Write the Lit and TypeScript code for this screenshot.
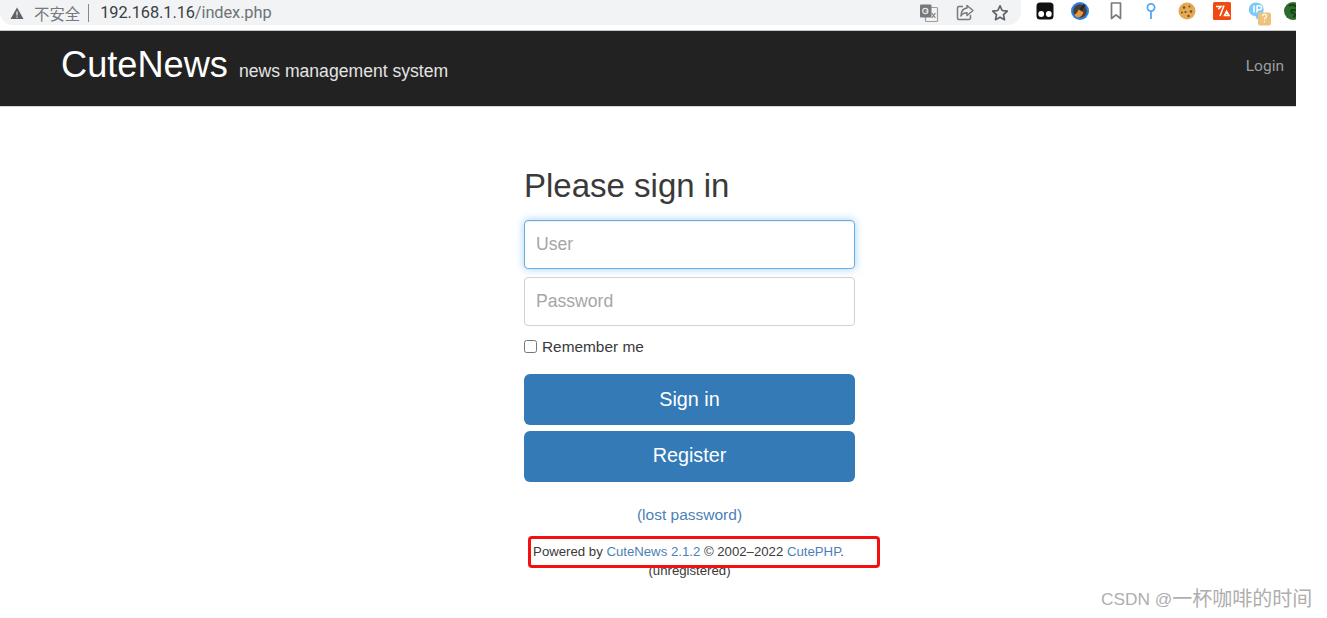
import { LitElement, html, css, svg } from "lit";
import { customElement } from "lit/decorators.js";

const translate = svg`<svg width="20" height="20" viewBox="0 0 20 20"><rect x="6.500" y="4.500" width="12" height="14" rx="1" fill="#f4f4f4" stroke="#9a9da1" stroke-width="1.200"/><rect x="1" y="1.500" width="11.500" height="13" rx="1" fill="#75787c"/><circle cx="6.300" cy="8" r="2.600" fill="none" stroke="#e8e8e8" stroke-width="1.200"/><path d="M6.500 8h2.400" stroke="#e8e8e8" stroke-width="1"/><path d="M12.800 10l3.600 5M16.400 10l-3.600 5" stroke="#777" stroke-width="1.100"/></svg>`;
const share = svg`<svg width="20" height="20" viewBox="0 0 20 20" fill="none" stroke="#77797d" stroke-width="1.500"><path d="M8 3.500H4a1.500 1.500 0 0 0-1.500 1.500v10A1.500 1.500 0 0 0 4 16.500h10a1.500 1.500 0 0 0 1.500-1.500v-3"/><path d="M12 2.500l6 5-6 5V9.700C9 9.700 7 10.800 6 13c0-4 2-7.500 6-8z" stroke-linejoin="round"/></svg>`;
const star = svg`<svg width="20" height="20" viewBox="0 0 20 20" fill="none" stroke="#606367" stroke-width="1.700"><path d="M10 2.800l2.200 4.700 5.100.6-3.800 3.500 1 5.100L10 14.200l-4.500 2.500 1-5.100L2.700 8.100l5.100-.6z" stroke-linejoin="round"/></svg>`;
const glasses = svg`<svg width="20" height="20" viewBox="0 0 20 20"><rect x="1.500" y="1.500" width="17" height="17" rx="3.500" fill="#111"/><circle cx="6.200" cy="13" r="2.900" fill="#fff"/><circle cx="13.800" cy="13" r="2.900" fill="#fff"/></svg>`;
const broom = svg`<svg width="20" height="20" viewBox="0 0 20 20"><circle cx="10" cy="10" r="9" fill="#2f7fe0"/><circle cx="10" cy="10" r="6.800" fill="#4a4038"/><path d="M4.500 13.500c2-.5 3-2.500 4-5l5 3c-1 2.500-2.500 4.500-5 5-2 .2-3.200-1.300-4-3z" fill="#e8993a"/><path d="M9.500 8l4-5 2 1.500-3.500 5z" fill="#2b2622"/></svg>`;
const bookmark = svg`<svg width="20" height="20" viewBox="0 0 20 20" fill="none" stroke="#77797d" stroke-width="1.700"><path d="M5.500 2h9v15.500L10 13.800 5.500 17.500z" stroke-linejoin="round"/></svg>`;
const pin = svg`<svg width="20" height="20" viewBox="0 0 20 20" fill="none" stroke="#56a6f5" stroke-width="1.800"><circle cx="10" cy="6.500" r="3.600"/><path d="M10 10v8"/></svg>`;
const cookie = svg`<svg width="20" height="20" viewBox="0 0 20 20"><circle cx="10" cy="10" r="8.500" fill="#e3aa55"/><g fill="#7a4a1e"><circle cx="7" cy="6.500" r="1.300"/><circle cx="12.500" cy="5.500" r="1"/><circle cx="14" cy="10.500" r="1.300"/><circle cx="8.500" cy="11" r="1.100"/><circle cx="5" cy="11.500" r=".9"/><circle cx="11.500" cy="15" r="1.200"/></g></svg>`;
const code = svg`<svg width="20" height="20" viewBox="0 0 20 20"><rect x="1" y="1" width="18" height="18" rx="1.500" fill="#f04a12"/><path d="M4 5.500h5L6.300 8.200M12 4.500L8 15M12.500 14.500h4.500L14.600 10.500z" fill="none" stroke="#fff" stroke-width="1.600"/></svg>`;
const ip = svg`<svg width="24" height="24" viewBox="0 0 24 24" overflow="visible"><path d="M9.500 1.500a7.500 7 0 0 0-4 13l3 .5 1.500 4 2-4 1-.5a7.500 7 0 0 0-3.500-13z" fill="#7cc8f7"/><path d="M7 4.500v7M10 4.500v7M10 4.800h2.500a2 2 0 0 1 0 4H10" fill="none" stroke="#fff" stroke-width="1.500"/><rect x="11" y="11.500" width="13" height="13" rx="2" fill="#ecc27d"/><path d="M15.500 15.300a2 2 0 1 1 2.800 1.800c-.6.300-.8.700-.8 1.400M17.500 20v1.200" fill="none" stroke="#fff" stroke-width="1.200"/></svg>`;
const ball = svg`<svg width="20" height="20" viewBox="0 0 20 20"><circle cx="10" cy="10" r="9" fill="#2f6b2c"/><path d="M6 5c3-2 7-1 8 2s-2 2-4 2-3 2 0 3 3 3 0 4" fill="none" stroke="#173f17" stroke-width="1.800"/></svg>`;

@customElement("app-root")
export class AppRoot extends LitElement {
  static styles = css`
    :host {
      display: block;
      position: relative;
      width: 1327px;
      height: 618px;
      overflow: hidden;
      background: #fff;
      font-family: "Liberation Sans", Arial, sans-serif;
      color: #333;
    }
    .chrome {
      height: 30px;
      display: flex;
      align-items: flex-start;
      width: 1296px;
      overflow: hidden;
    }
    .pill {
      flex: 0 0 1021px;
      height: 25px;
      background: #f1f3f4;
      border-radius: 0 0 13px 13px;
      display: flex;
      align-items: center;
      padding-left: 10px;
      padding-right: 10px;
      box-sizing: border-box;
    }
    .warn { width: 14px; height: 14px; margin-right: 10px; }
    .unsafe {
      font: 15.400px "Noto Sans CJK SC", sans-serif;
      color: #75787c;
    }
    .sep { width: 1px; height: 18px; background: #85888c; margin: 0 11px 0 8px; }
    .url { font: 16.400px Roboto, sans-serif; color: #3c4043; letter-spacing: -0.1px; }
    .url span { color: #6f7276; }
    .actions { margin-left: auto; display: flex; gap: 15.500px; align-items: center; padding-right: 1px; }
    .ico { width: 20px; height: 20px; display: block; }
    .exts {
      display: flex;
      gap: 15.400px;
      margin-left: 14px;
      align-items: center;
      height: 21px;
      flex: none;
    }
    .navbar {
      width: 1296px;
      height: 77px;
      box-sizing: border-box;
      background: #222;
      border-top: 1px solid #c8c8c8;
      border-bottom: 1px solid #d6d6d6;
      display: flex;
      align-items: center;
      padding: 0 12px 0 61px;
    }
    .brand { font-size: 36.200px; color: #fff; line-height: 68px; position: relative; top: -4px; }
    .tag { font-size: 17.600px; color: #e4e4e4; margin-left: 11px; position: relative; top: 3px; }
    .login { margin-left: auto; font: 15.500px Roboto, sans-serif; color: #9d9d9d; margin-top: -5px; }
    main {
      width: 331px;
      margin-left: 524px;
      display: flex;
      flex-direction: column;
    }
    h2 {
      font-size: 33px;
      font-weight: 400;
      line-height: 40px;
      margin: 59px 0 14px;
      color: #3a3a3a;
    }
    .input {
      height: 49px;
      box-sizing: border-box;
      border: 1px solid #d2d2d2;
      border-radius: 4px;
      padding: 0 11px;
      display: flex;
      align-items: center;
      font-size: 17.600px;
      color: #a6a6a6;
      background: #fff;
    }
    .input.focus {
      border-color: #66afe9;
      box-shadow: inset 0 1px 1px rgba(0,0,0,.075), 0 0 8px rgba(102,175,233,.6);
      margin-bottom: 8px;
    }
    .check {
      display: flex;
      align-items: center;
      gap: 5px;
      font-size: 15.400px;
      margin: 11px 0 18px;
      line-height: 19px;
      color: #3a3a3a;
    }
    .box { width: 11px; height: 11px; border: 1px solid #767676; border-radius: 2.500px; background: #fff; }
    .btn {
      height: 51px;
      background: #337ab7;
      border-radius: 6px;
      box-sizing: border-box;
      color: #fff;
      font-size: 19.800px;
      display: flex;
      align-items: center;
      justify-content: center;
      padding-bottom: 1px;
      margin-bottom: 6px;
    }
    .btn.reg { padding-bottom: 3px; }
    a { color: #4c7fb8; text-decoration: none; }
    .lost { text-align: center; font-size: 15.500px; margin-top: 17px; line-height: 20px; }
    .powered { text-align: center; font-size: 13.200px; color: #3a3a3a; margin-top: 17px; line-height: 19px; margin-left: -2px; }
    .unreg { display: block; line-height: 19px; margin-left: 2px; }
    .redbox {
      position: absolute;
      left: 528px;
      top: 536px;
      width: 352px;
      height: 32px;
      box-sizing: border-box;
      border: 3px solid #f60f0f;
      border-radius: 4px;
    }
    .mark {
      position: absolute;
      left: 1101px;
      top: 582px;
      font: 17.300px "Liberation Sans", sans-serif;
      color: #aeaeae;
      white-space: nowrap;
    }
    .mark span { font: 20px "Noto Sans CJK SC", sans-serif; position: relative; top: 1px; }
  `;

  render() {
    const ex = (i: unknown) => html`<span class="ico">${i}</span>`;
    return html`
      <div class="chrome">
        <div class="pill">
          <svg class="warn" viewBox="0 0 14 14"><path d="M7 1.500L13.500 13H.5z" fill="#5f6368"/><path d="M7 5.500v4M7 10.500v1.200" stroke="#f1f3f4" stroke-width="1.200"/></svg>
          <span class="unsafe">不安全</span><i class="sep"></i>
          <span class="url">192.168.1.16<span>/index.php</span></span>
          <div class="actions">${ex(translate)}${ex(share)}${ex(star)}</div>
        </div>
        <div class="exts">
          ${ex(glasses)}${ex(broom)}${ex(bookmark)}${ex(pin)}${ex(cookie)}${ex(code)}${ex(ip)}${ex(ball)}
        </div>
      </div>
      <header class="navbar">
        <span class="brand">CuteNews</span>
        <span class="tag">news management system</span>
        <span class="login">Login</span>
      </header>
      <main>
        <h2>Please sign in</h2>
        <div class="input focus">User</div>
        <div class="input">Password</div>
        <label class="check"><span class="box"></span>Remember me</label>
        <div class="btn">Sign in</div>
        <div class="btn reg">Register</div>
        <div class="lost"><a href="#">(lost password)</a></div>
        <div class="powered">
          Powered by <a href="#">CuteNews 2.1.2</a> © 2002–2022 <a href="#">CutePHP</a>.
          <span class="unreg">(unregistered)</span>
        </div>
      </main>
      <div class="redbox"></div>
      <div class="mark">CSDN @<span>一杯咖啡的时间</span></div>
    `;
  }
}
